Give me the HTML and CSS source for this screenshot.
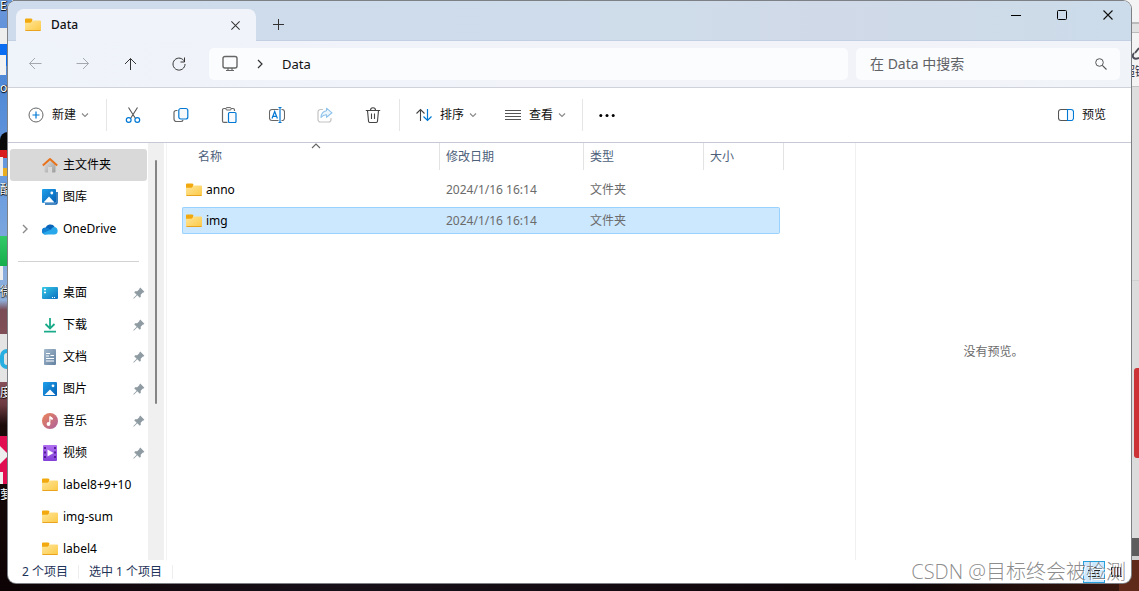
FILE: index.html
```html
<!DOCTYPE html>
<html lang="zh-CN">
<head>
<meta charset="utf-8">
<title>Data</title>
<link rel="stylesheet" href="styles.css">
</head>
<body>
<svg class="defs" width="0" height="0" aria-hidden="true">
  <defs>
    <linearGradient id="g-folder" x1="0" y1="0" x2="1" y2="1"><stop offset="0" stop-color="#ffe69a"/><stop offset="1" stop-color="#fcc945"/></linearGradient>
    <linearGradient id="g-blue" x1="0" y1="0" x2="1" y2="1"><stop offset="0" stop-color="#1ea0ea"/><stop offset="1" stop-color="#0560b4"/></linearGradient>
    <linearGradient id="g-desk" x1="0" y1="0" x2="1" y2="1"><stop offset="0" stop-color="#35c9e6"/><stop offset="1" stop-color="#0b6fc0"/></linearGradient>
    <linearGradient id="g-home" x1="0" y1="0" x2="1" y2="1"><stop offset="0" stop-color="#e3e3e3"/><stop offset="1" stop-color="#9c9c9c"/></linearGradient>
    <linearGradient id="g-doc" x1="0" y1="0" x2="1" y2="1"><stop offset="0" stop-color="#a3b9cd"/><stop offset="1" stop-color="#6481a0"/></linearGradient>
    <linearGradient id="g-music" x1="0" y1="0" x2="1" y2="1"><stop offset="0" stop-color="#ec8557"/><stop offset="1" stop-color="#ad609f"/></linearGradient>
    <linearGradient id="g-video" x1="0" y1="0" x2="0" y2="1"><stop offset="0" stop-color="#b06ff0"/><stop offset="1" stop-color="#8240d8"/></linearGradient>
    <symbol id="folder" viewBox="0 0 16 16"><path d="M0 2.500a1 1 0 0 1 1-1h5.500l1.500 1.700h-1v3H0z" fill="#f2a90f"/><path d="M0 5.800h5.500l2.300-2.300H15a1 1 0 0 1 1 1V13a1 1 0 0 1-1 1H1a1 1 0 0 1-1-1z" fill="url(#g-folder)"/><path d="M.5 13.500h15" stroke="#e9a31c" stroke-width="1"/></symbol>
    <symbol id="chev" viewBox="0 0 8 8"><path d="M1 2.500l3 3 3-3" fill="none" stroke="#888" stroke-width="1.100"/></symbol>
    <symbol id="pin" viewBox="0 0 12 12"><path d="M7.200.6l4.200 4.200-.8.800-.7-.1-2.200 2.300.1 2-1 1L4.300 8.300 1 11.600H.4V11l3.300-3.300L1.200 5.200l1-1 2 .1 2.300-2.200-.1-.7z" fill="#8f9ba3"/></symbol>
    <symbol id="x" viewBox="0 0 12 12"><path d="M1.500 1.500l9 9M10.500 1.500l-9 9" fill="none" stroke="currentColor" stroke-width="1.100"/></symbol>
  </defs>
</svg>

<div class="desktop" aria-hidden="true">
  <div class="wall wall-left">
    <i class="tile t1"></i><i class="tile t2"></i><i class="tile t3"></i><i class="tile t4"></i><i class="tile t5"></i>
    <i class="tile t6"></i><i class="tile t7"></i><i class="tile t8"></i><i class="tile t9"></i><i class="tile t10"></i>
    <i class="tile t11"></i><i class="tile t12"></i><i class="tile t13"></i><i class="tile t14"></i>
    <span class="name n1">Ed</span><span class="name n2">o</span><span class="name n3">酷</span>
    <span class="name n4">微</span><span class="name n5">度</span><span class="name n6">萝</span>
  </div>
  <div class="wall wall-right">
    <i class="red-tab"></i>
    <svg class="link" width="8" height="14" viewBox="0 0 8 14"><path d="M8 1L4 6M3 6C0 10 3 13 8 11" fill="none" stroke="#4d4d5a" stroke-width="2"/></svg>
    <span class="behind">超链</span>
  </div>
</div>

<main class="window">
  <header class="titlebar">
    <div class="tab">
      <svg class="i16"><use href="#folder"/></svg>
      <span class="tab-title">Data</span>
      <button class="tab-close" aria-label="关闭标签页"><svg width="11" height="11"><use href="#x"/></svg></button>
    </div>
    <button class="new-tab" aria-label="新建标签页"><svg width="12" height="12" viewBox="0 0 12 12"><path d="M1 5.500h11M6.500 0v11" stroke="#333" fill="none"/></svg></button>
    <div class="controls">
      <button aria-label="最小化"><svg width="12" height="12" viewBox="0 0 12 12"><path d="M1 6.500h10" stroke="#000" fill="none"/></svg></button>
      <button aria-label="最大化"><svg width="12" height="12" viewBox="0 0 12 12"><rect x="1.500" y="1.500" width="9" height="9" rx="1" stroke="#000" fill="none"/></svg></button>
      <button aria-label="关闭"><svg width="12" height="12"><use href="#x"/></svg></button>
    </div>
  </header>

  <nav class="navbar">
    <button class="nav-btn dim" aria-label="后退"><svg class="i16" viewBox="0 0 16 16"><path d="M14.500 7.500H2.500M8 2L2.500 7.500 8 13"/></svg></button>
    <button class="nav-btn dim" aria-label="前进"><svg class="i16" viewBox="0 0 16 16"><path d="M1.500 7.500h12M8 2l5.500 5.500L8 13"/></svg></button>
    <button class="nav-btn" aria-label="向上"><svg class="i16" viewBox="0 0 16 16"><path d="M7.500 14V2.500M2 8l5.500-5.500L13 8"/></svg></button>
    <button class="nav-btn" aria-label="刷新"><svg class="i16" viewBox="0 0 16 16"><path d="M13.500 5.700A6 6 0 1 0 14 8M13.500 1.500v4.500H9.500"/></svg></button>
    <div class="address">
      <svg class="i18" viewBox="0 0 18 18"><rect x="2" y="1.500" width="14" height="11.500" rx="2" fill="none" stroke="#666" stroke-width="1.400"/><path d="M7 13v2.500M11 13v2.500M5 15.500h8" stroke="#666" stroke-width="1.200"/></svg>
      <svg class="crumb-arrow" width="8" height="10" viewBox="0 0 8 10"><path d="M2 1l4 4-4 4" fill="none" stroke="#333" stroke-width="1.200"/></svg>
      <a class="crumb" href="#">Data</a>
    </div>
    <div class="search">
      <input class="search-box" type="text" aria-label="搜索" placeholder="在 Data 中搜索">
      <svg width="14" height="14" viewBox="0 0 14 14"><circle cx="5.500" cy="5.500" r="3.800" fill="none" stroke="#555" stroke-width="1"/><path d="M8.300 8.300l4.200 4.200" stroke="#555" stroke-width="1.100"/></svg>
    </div>
  </nav>

  <div class="toolbar">
    <button class="cmd first"><svg class="i16" viewBox="0 0 16 16"><circle cx="8" cy="8" r="7" fill="none" stroke="#666" stroke-width="1"/><path d="M8 4.500v7M4.500 8h7" stroke="#0078d4" stroke-width="1.200"/></svg>新建<svg class="i8"><use href="#chev"/></svg></button>
    <span class="sep"></span>
    <button class="tool" aria-label="剪切"><svg class="i16" viewBox="0 0 16 16"><path d="M3.500.5l6.700 10.500M12.500.5L5.800 11" stroke="#555" stroke-width="1.100" fill="none"/><circle cx="3.700" cy="13" r="2.400" fill="none" stroke="#0078d4" stroke-width="1.200"/><circle cx="12.300" cy="13" r="2.400" fill="none" stroke="#0078d4" stroke-width="1.200"/></svg></button>
    <button class="tool" aria-label="复制"><svg class="i16" viewBox="0 0 16 16"><path d="M4.500 3.500H3a2 2 0 0 0-2 2V12a2.500 2.500 0 0 0 2.500 2.500H8a2 2 0 0 0 2-1.500" fill="none" stroke="#666" stroke-width="1.200"/><rect x="5.800" y="1.500" width="9" height="10.500" rx="2" fill="#f7f9fb" stroke="#0078d4" stroke-width="1.200"/></svg></button>
    <button class="tool" aria-label="粘贴"><svg class="i16" viewBox="0 0 16 16"><path d="M6.500 15.400H3a1.500 1.500 0 0 1-1.500-1.500V3A1.500 1.500 0 0 1 3 1.500h9A1.500 1.500 0 0 1 13.500 3v1" fill="none" stroke="#666" stroke-width="1.200"/><rect x="4.800" y=".6" width="5.500" height="2.400" rx="1.200" fill="#fff" stroke="#666"/><rect x="7.500" y="5.500" width="7.500" height="10" rx="1" fill="#f7fbff" stroke="#0078d4" stroke-width="1.200"/></svg></button>
    <button class="tool" aria-label="重命名"><svg class="i16" viewBox="0 0 16 16"><path d="M9.500 2.500H3a2.500 2.500 0 0 0-2.500 2.500v6A2.500 2.500 0 0 0 3 13.500h6.500M12.500 2.500h.5a2.500 2.500 0 0 1 2.500 2.500v6a2.500 2.500 0 0 1-2.500 2.500h-.5" fill="none" stroke="#666" stroke-width="1.100"/><path d="M3 11.500L5.700 4.500l2.700 7M4 9.300h3.400M11 .5v15M9.500.5h3M9.500 15.500h3" fill="none" stroke="#0078d4" stroke-width="1.200"/></svg></button>
    <button class="tool" aria-label="共享" disabled><svg class="i16" viewBox="0 0 16 16"><path d="M6 2.500H3.500a2.500 2.500 0 0 0-2.500 2.500v7.500A2.500 2.500 0 0 0 3.500 15h8a2.500 2.500 0 0 0 2.500-2.500V11" fill="none" stroke="#c4c4c4" stroke-width="1.200"/><path d="M9.500 1.200l5.500 4.600-5.500 4.500V7.800C7 7.600 5.500 8.600 4 10.500c.2-4 2-6.300 5.500-6.800z" fill="#edf6fd" stroke="#8fc3eb" stroke-width="1.100" stroke-linejoin="round"/></svg></button>
    <button class="tool" aria-label="删除"><svg class="i16" viewBox="0 0 16 16"><path d="M.8 3.500h14.400M5.500 3.300c0-3.400 5-3.400 5 0M2.500 3.500l1 10.500a1.500 1.500 0 0 0 1.500 1.500h6a1.500 1.500 0 0 0 1.500-1.500l1-10.500M6.500 6.500v5.500M9.500 6.500v5.500" fill="none" stroke="#444" stroke-width="1.100"/></svg></button>
    <span class="sep"></span>
    <button class="cmd"><svg class="i16" viewBox="0 0 16 16"><path d="M4.500 14V2.500M.5 6.500l4-4 4 4" fill="none" stroke="#444" stroke-width="1.100"/><path d="M11.500 2v11.500M7.500 9.500l4 4 4-4" fill="none" stroke="#0078d4" stroke-width="1.200"/></svg>排序<svg class="i8"><use href="#chev"/></svg></button>
    <button class="cmd"><svg class="i16" viewBox="0 0 16 16"><path d="M0 3.500h16M0 6.500h16M0 9.500h16M0 12.500h16" stroke="#555"/></svg>查看<svg class="i8"><use href="#chev"/></svg></button>
    <span class="sep"></span>
    <button class="tool more" aria-label="更多"><svg class="i16" viewBox="0 0 16 16"><circle cx="1.800" cy="8.500" r="1.500"/><circle cx="8" cy="8.500" r="1.500"/><circle cx="14.200" cy="8.500" r="1.500"/></svg></button>
    <button class="cmd preview-toggle"><svg class="i16" viewBox="0 0 16 16"><path d="M9.500 2.500H3A2.500 2.500 0 0 0 .5 5v6A2.500 2.500 0 0 0 3 13.500h6.500" fill="none" stroke="#555" stroke-width="1.100"/><path d="M9.500 2.500H13A2.500 2.500 0 0 1 15.500 5v6a2.500 2.500 0 0 1-2.500 2.500H9.500z" fill="#f3f9fe" stroke="#0078d4" stroke-width="1.100"/></svg>预览</button>
  </div>

  <div class="body">
    <aside class="sidebar">
      <a class="item active" href="#"><svg class="i16" viewBox="0 0 16 16"><path d="M2.500 7L8 2l5.500 5v7.500a1 1 0 0 1-1 1H10V10H6v5.500H3.500a1 1 0 0 1-1-1z" fill="url(#g-home)"/><path d="M.8 8.500L8 2l7.200 6.500" fill="none" stroke="#e8731c" stroke-width="2" stroke-linejoin="round"/></svg><span>主文件夹</span></a>
      <a class="item" href="#"><svg class="i16" viewBox="0 0 16 16"><path d="M15 3v10.500a1.500 1.500 0 0 1-1.500 1.500H3" fill="none" stroke="#0c62b0" stroke-width="1.600"/><rect width="14" height="14" rx="1" fill="url(#g-blue)"/><path d="M1.500 13.500L7 7.500l5.500 6z" fill="#fff"/><circle cx="9.800" cy="4" r="1.400" fill="#fff"/></svg><span>图库</span></a>
      <a class="item" href="#"><svg class="expand" width="8" height="10" viewBox="0 0 8 10"><path d="M2 1l4 4-4 4" fill="none" stroke="#8a8a8a" stroke-width="1.400"/></svg><svg class="i16" viewBox="0 0 16 16"><path d="M3.500 7.500A5 5 0 0 1 12.700 6L9 11H3z" fill="#0a64b8"/><path d="M3.300 13.500A3.300 3.300 0 0 1 3.300 6.500c1.800-.2 3.500 1 5 2L6 13z" fill="#1380d2"/><path d="M12 6a3.800 3.800 0 0 1 .7 7.500H3.300c-1 0-2-.5-2.600-1.300L9 8.500C9.800 7 10.700 6.100 12 6z" fill="#28a8ea"/></svg><span>OneDrive</span></a>
      <hr class="rule">
      <a class="item" href="#"><svg class="i16" viewBox="0 0 16 16"><rect y="2" width="16" height="12" rx="1" fill="url(#g-desk)"/><path d="M2 4.500h2M2 7.500h2" stroke="#fff" stroke-width="1.500"/><path d="M10 12.500h4" stroke="#fff" stroke-dasharray="1 1"/></svg><span>桌面</span><svg class="pin"><use href="#pin"/></svg></a>
      <a class="item" href="#"><svg class="i16" viewBox="0 0 16 16"><path d="M8 1v10M3.500 7L8 11.500 12.500 7M2 14.700h12" fill="none" stroke="#1aab8a" stroke-width="1.800"/></svg><span>下载</span><svg class="pin"><use href="#pin"/></svg></a>
      <a class="item" href="#"><svg class="i16" viewBox="0 0 16 16"><rect x="2" width="12" height="16" rx="1" fill="url(#g-doc)"/><path d="M4 4.500h4M4 7h3M8.500 6.500H12M4 9.500h8M4 12h8" stroke="#fff" stroke-width="1.200"/></svg><span>文档</span><svg class="pin"><use href="#pin"/></svg></a>
      <a class="item" href="#"><svg class="i16" viewBox="0 0 16 16"><rect x="1" y="1" width="14" height="14" rx="1" fill="url(#g-blue)"/><path d="M2.500 14L8 8.500l5.500 5.500z" fill="#fff"/><circle cx="11" cy="4.800" r="1.400" fill="#fff"/></svg><span>图片</span><svg class="pin"><use href="#pin"/></svg></a>
      <a class="item" href="#"><svg class="i16" viewBox="0 0 16 16"><circle cx="8" cy="8" r="8" fill="url(#g-music)"/><path d="M7.800 11V3.500l2.500 1.500v1.500L8.500 5.500" fill="#fff" stroke="#fff"/><circle cx="6.500" cy="11" r="1.900" fill="#fff"/></svg><span>音乐</span><svg class="pin"><use href="#pin"/></svg></a>
      <a class="item" href="#"><svg class="i16" viewBox="0 0 16 16"><rect x="1" width="14" height="16" rx="1" fill="url(#g-video)"/><path d="M3 2v13M13 2v13" stroke="#4b188e" stroke-width="1.800" stroke-dasharray="2 2.500"/><path d="M5.500 4.500L11.500 8l-6 3.500z" fill="#fff"/></svg><span>视频</span><svg class="pin"><use href="#pin"/></svg></a>
      <a class="item" href="#"><svg class="i16"><use href="#folder"/></svg><span>label8+9+10</span></a>
      <a class="item" href="#"><svg class="i16"><use href="#folder"/></svg><span>img-sum</span></a>
      <a class="item" href="#"><svg class="i16"><use href="#folder"/></svg><span>label4</span></a>
    </aside>
    <div class="scrollbar"><div class="thumb"></div></div>

    <section class="files">
      <table class="grid">
        <colgroup><col class="c-name"><col class="c-date"><col class="c-type"><col class="c-size"><col class="c-end"></colgroup>
        <thead>
          <tr>
            <th><div class="head head-name">名称<svg class="sort-mark" width="10" height="6" viewBox="0 0 10 6"><path d="M1 5l4-4 4 4" fill="none" stroke="#666" stroke-width="1.100"/></svg></div></th>
            <th><div class="head">修改日期</div></th>
            <th><div class="head">类型</div></th>
            <th colspan="2"><div class="head">大小</div></th>
          </tr>
        </thead>
        <tbody>
          <tr><td><div class="file"><svg class="i16"><use href="#folder"/></svg>anno</div></td><td>2024/1/16 16:14</td><td>文件夹</td><td></td><td class="end"></td></tr>
          <tr class="selected"><td><div class="file"><svg class="i16"><use href="#folder"/></svg>img</div></td><td>2024/1/16 16:14</td><td>文件夹</td><td></td><td class="end"></td></tr>
        </tbody>
      </table>
    </section>
    <aside class="preview">没有预览。</aside>
  </div>

  <footer class="status">
    <span class="stat">2 个项目</span>
    <span class="stat">选中 1 个项目</span>
    <div class="views">
      <button class="view on" aria-label="详细信息"><svg width="14" height="12" viewBox="0 0 14 12"><path d="M4 1.500h6M1 4.500h4M7 4.500h6M2 7.500h10M1 10.500h12" stroke="#222"/></svg></button>
      <button class="view" aria-label="大图标"><svg width="12" height="12" viewBox="0 0 12 12"><path d="M1.500 1.500h9v8h-9zM4.500 1.500v8M7.500 1.500v8M0 10.500h12" fill="none" stroke="#222"/></svg></button>
    </div>
  </footer>
</main>
<div class="watermark">CSDN @目标终会被检测</div>
</body>
</html>
```
FILE: styles.css
```css
* { box-sizing: border-box; }

body {
  margin: 0;
  height: 100vh;
  padding: 1px 8px 8px;
  overflow: hidden;
  position: relative;
  background: #0d0507;
  color: #111;
  font: 12px/16px "Noto Sans", "Noto Sans CJK SC", sans-serif;
}

button, input { font: inherit; color: inherit; }
button { border: 0; padding: 0; background: none; display: flex; align-items: center; justify-content: center; }
a { color: inherit; text-decoration: none; }
svg { flex: none; display: block; }
.defs { position: absolute; }
.i16 { width: 16px; height: 16px; }
.i18 { width: 18px; height: 18px; }
.i8 { width: 8px; height: 8px; }

/* Desktop behind the window */
.desktop { position: absolute; inset: 0; background: linear-gradient(90deg, #6f97c4 405px, #b5b3b3 405px) 0 0 / 100% 12px no-repeat, linear-gradient(90deg, #0d0507, #181019 30%, #0d0507 80%, #3a190f); }
.wall { position: absolute; top: 0; bottom: 0; overflow: hidden; }
.wall-left { left: 0; width: 20px; background: linear-gradient(#6c98dc 0, #4f88d6 80px, #6f9fdf 200px, #8fb0dc 300px, #7a4c55 310px, #8a525a 380px, #6b3a40 405px, #1a0a0a 425px, #0d0304 100%); }
.wall-right { right: 0; width: 20px; background: linear-gradient(#f4f4f4 22px, #bbb 22px 24px, #e2e2e2 24px 32px, #bbb 32px 33px, #f4f4f4 33px 86px, #c4c4c4 86px 87px, #dedede 87px 280px, #d0d0d0 280px 281px, #dcdcdc 281px 538px, #5d5d5d 538px 556px, #d0d0d0 556px 560px, #5f2a1a 560px); }
.tile { position: absolute; left: 0; width: 9px; }
.t1 { top: 28px; height: 16px; background: #eee; }
.t2 { top: 44px; height: 22px; background: #0a6df2; }
.t3 { top: 55px; height: 20px; width: 6px; background: #f2f2f2; }
.t4 { top: 132px; height: 18px; background: #090909; border-radius: 8px 0 0 0; }
.t5 { top: 150px; height: 8px; background: #d81e1e; }
.t6 { top: 157px; height: 19px; width: 3px; background: #eee; }
.t7 { top: 168px; height: 8px; left: 3px; background: #e8ad21; }
.t8 { top: 236px; height: 30px; background: linear-gradient(#34c968, #16ad4c); }
.t9 { top: 266px; height: 14px; width: 3px; background: #eee; }
.t10 { top: 334px; height: 48px; background: #e4e4e4; }
.t11 { top: 349px; height: 20px; width: 14px; border: 4px solid #28aee0; border-radius: 10px; }
.t12 { top: 436px; height: 48px; background: #e10f52; }
.t13 { top: 446px; height: 18px; background: #eee; clip-path: polygon(0 0, 100% 50%, 0 100%); }
.t14 { top: 472px; height: 12px; width: 3px; background: #eee; }
.name { position: absolute; left: 0; color: #fff; text-shadow: 0 1px 1px #000, 1px 0 1px #000; }
.n1 { top: 0; line-height: 12px; }
.n2 { top: 80px; }
.n3 { top: 182px; }
.n4 { top: 284px; }
.n5 { top: 385px; }
.n6 { top: 487px; }
.red-tab { position: absolute; top: 368px; right: 0; width: 5px; height: 90px; border-radius: 3px 0 0 3px; background: #cc3336; }
.link { position: absolute; right: 0; top: 47px; }
.behind { position: absolute; right: -8px; top: 64px; color: #334; }

/* Window frame */
.window { position: relative; height: 100%; display: flex; flex-direction: column; overflow: hidden; border-radius: 8px; background: #fff; box-shadow: 0 0 0 1px #7d8085; }

.titlebar { height: 40px; flex: none; display: flex; align-items: flex-start; padding-left: 8px; background: linear-gradient(90deg, #cedbec, #cfdcea 60%, #d0d9e7 72%, #ccdcea); box-shadow: inset 0 -1px #c3d0e3; }
.tab { width: 240px; height: 32px; margin-top: 8px; padding: 0 12px 0 9px; display: flex; align-items: center; gap: 10px; background: #f0f4fa; border-radius: 8px 8px 0 0; }
.tab-title { flex: 1; font-weight: 500; }
.tab-close { width: 18px; height: 24px; color: #333; }
.new-tab { width: 32px; height: 32px; margin: 8px 0 0 6px; }
.controls { margin-left: auto; display: flex; }
.controls button { width: 46px; height: 28px; }

.navbar { height: 47px; flex: none; display: flex; align-items: center; padding: 0 11px 0 3px; background: linear-gradient(90deg, #eff3fa, #f1f3f8 60%, #f2f3f8 80%, #f0f4f9); border-bottom: 1px solid #d0d2da; }
.nav-btn { width: 48px; height: 32px; flex: none; }
.nav-btn path { fill: none; stroke: #333; stroke-width: 1; }
.dim path { stroke: #a5a8ae; }
.address { flex: 1; height: 32px; margin: 0 8px 0 6px; padding-left: 12px; display: flex; align-items: center; background: #fbfcfe; border-radius: 5px; }
.crumb-arrow { margin: 0 18px 0 17px; }
.crumb { font-size: 13px; }
.search { width: 264px; height: 32px; padding: 0 12px 0 14px; display: flex; align-items: center; background: #fbfcfe; border-radius: 5px; }
.search-box { flex: 1; min-width: 0; border: 0; padding: 0; outline: 0; background: none; font-size: 14px; }
.search-box::placeholder { color: #606266; opacity: 1; }

.toolbar { height: 55px; flex: none; display: flex; align-items: center; padding: 0 11px 0 6px; border-bottom: 1px solid #c6c8d6; }
.cmd { height: 32px; padding: 0 14px; gap: 8px; }
.cmd .i8 { margin-left: -3px; }
.first { padding-right: 15px; }
.tool { width: 48px; height: 32px; }
.more { width: 44px; }
.sep { width: 1px; height: 32px; margin: 0 2px; background: #e6e6e6; }
.preview-toggle { margin-left: auto; }

/* Content */
.body { flex: 1; min-height: 0; display: flex; }
.sidebar { width: 140px; flex: none; padding: 6px 1px 0 2px; overflow: hidden; color: #000; }
.item { position: relative; height: 32px; padding: 0 2px 0 32px; display: flex; align-items: center; gap: 5px; border-radius: 3px; white-space: nowrap; }
.active { background: #d9d9d9; }
.expand { position: absolute; left: 11px; }
.pin { width: 12px; height: 12px; margin-left: auto; }
.rule { height: 1px; margin: 16px 8px 15px; border: 0; background: #d2d2d2; }
.scrollbar { width: 16px; flex: none; padding: 17px 7px 0; background: #f0f0f0; }
.thumb { width: 2px; height: 61%; background: #858585; border-radius: 1px; }

.files { flex: 1; min-width: 0; margin-left: 2px; padding-left: 15px; border-left: 1px solid #f3f3f3; overflow: hidden; }
.grid { width: 602px; table-layout: fixed; border-collapse: separate; border-spacing: 0 4px; margin-top: -4px; color: #6b6b6b; }
.c-name { width: 258px; }
.c-date { width: 144px; }
.c-type { width: 120px; }
.c-size { width: 76px; }
.c-end { width: 4px; }
.grid th { height: 29px; padding: 0; text-align: left; vertical-align: top; font-weight: 400; color: #4c607a; }
.head { position: relative; height: 27px; padding: 6px 0 0 6px; border-right: 1px solid #e3e3e3; }
.head-name { padding-left: 16px; }
.sort-mark { position: absolute; left: 50%; top: 0; }
.grid td { height: 27px; padding: 0 0 0 6px; }
.grid .end { padding: 0; }
.file { display: flex; align-items: center; gap: 4px; margin-left: -2px; color: #000; }
.selected td:not(.end) { background: #cce8ff; border: solid #99d1ff; border-width: 1px 0; }
.selected td:first-child { border-left-width: 1px; padding-left: 5px; border-radius: 2px 0 0 2px; }
.selected td:nth-child(4) { border-right-width: 1px; border-radius: 0 2px 2px 0; }
.preview { width: 276px; flex: none; display: flex; align-items: center; justify-content: center; border-left: 1px solid #f0f0f0; color: #6b6b6b; }

.status { height: 23px; flex: none; display: flex; align-items: center; padding: 0 4px 0 14px; color: #1e3358; }
.stat { padding-right: 10px; margin-right: 10px; border-right: 1px solid #eee; line-height: 14px; }
.views { margin-left: auto; display: flex; }
.view { width: 22px; height: 22px; }
.on { background: #cce8ff; border: 1px solid #26a0da; }

.watermark { position: absolute; right: 13px; bottom: 5px; font-size: 20px; line-height: 28px; color: rgba(110, 110, 110, .8); text-shadow: 1px 1px #fff; white-space: nowrap; font-family: "Open Sans", "Noto Sans CJK SC", sans-serif; font-weight: 300; }
```
